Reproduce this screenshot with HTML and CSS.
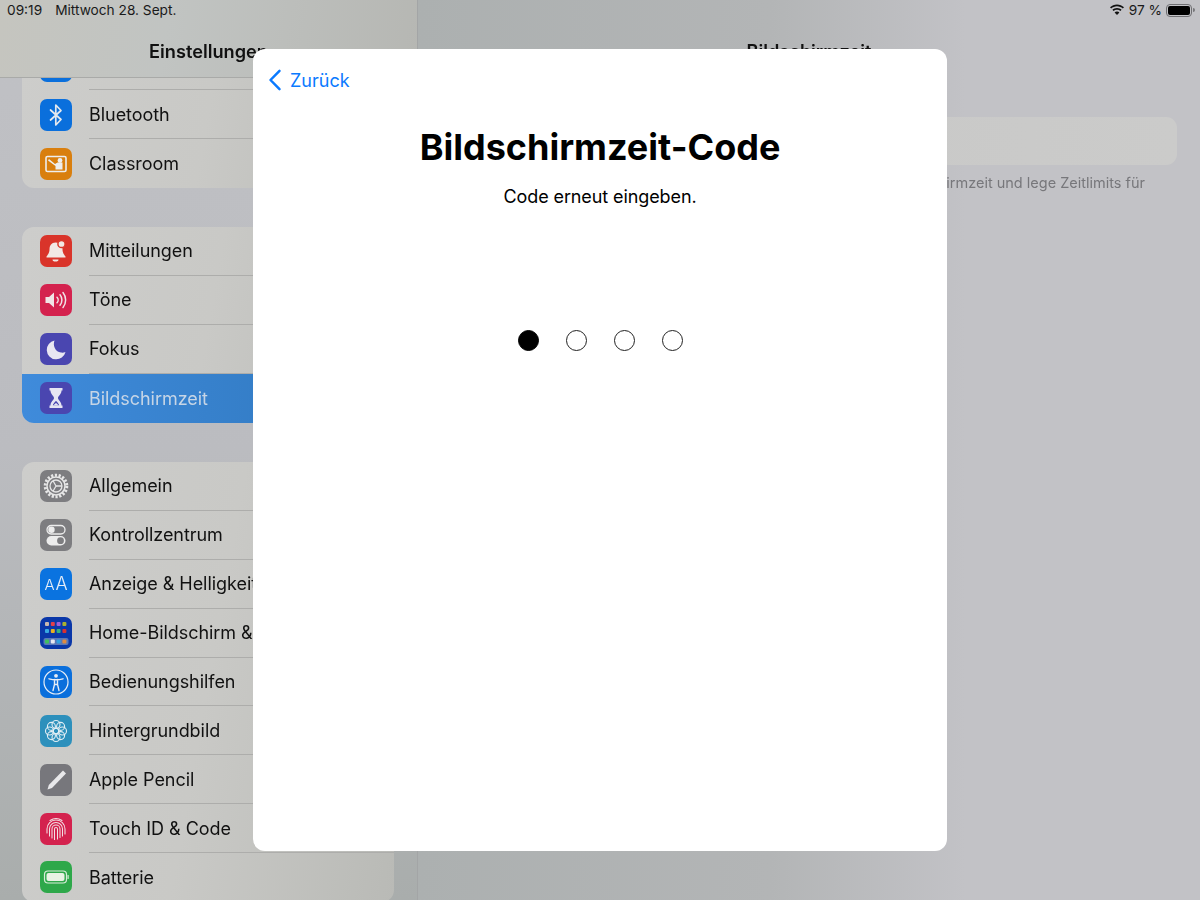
FILE: index.html
```html
<!DOCTYPE html>
<html lang="de">
<head>
<meta charset="utf-8">
<title>Bildschirmzeit-Code</title>
<link rel="stylesheet" href="styles.css">
</head>
<body>
<div class="screen">
  <aside class="sidebar">
    <header class="side-head"><h2>Einstellungen</h2></header>
    <div class="side-list">
      <section class="group first">
        <div class="row"><span class="icon blue"></span><span class="label"></span></div>
        <div class="row"><span class="icon blue"><svg viewBox="0 0 32 32"><path d="M10.500 11 21 20.500 15.800 26V6L21 11.500 10.500 21" fill="none" stroke="#e4e8ee" stroke-width="1.700" stroke-linejoin="round" stroke-linecap="round"/></svg></span><span class="label">Bluetooth</span></div>
        <div class="row"><span class="icon orange"><svg viewBox="0 0 32 32"><rect x="6" y="8.500" width="20" height="15" rx="1.500" fill="none" stroke="#eee" stroke-width="1.600"/><circle cx="20" cy="12.500" r="2.400" fill="#eee"/><path d="M9 11l6 5 2.500-1.500h5V21.500h-7V18L8 12.500z" fill="#eee"/></svg></span><span class="label">Classroom</span></div>
      </section>
      <section class="group">
        <div class="row"><span class="icon red"><svg viewBox="0 0 32 32"><path d="M15.500 7.500c-4 0-6 3-6 6.500 0 4-1.500 5.500-3 7.500v1h19v-1c-1.500-2-3-3.500-3-7.500 0-3-2-6.500-7-6.500z" fill="#f2e8e4"/><path d="M12.500 24.500h6a3 2 0 0 1-6 0z" fill="#f2e8e4"/><circle cx="21.500" cy="9" r="3.600" fill="#f2e8e4" stroke="#d93a2c" stroke-width="1.500"/></svg></span><span class="label">Mitteilungen</span></div>
        <div class="row"><span class="icon rose"><svg viewBox="0 0 32 32"><path d="M5.500 13h3.500l5-4.500v15l-5-4.500H5.500z" fill="#f0e4e6"/><path d="M17 13.200a4 4 0 0 1 0 5.600M20 10.800a8 8 0 0 1 0 10.400M23 8.500a12 12 0 0 1 0 15" fill="none" stroke="#f0e4e6" stroke-width="1.500" stroke-linecap="round"/></svg></span><span class="label">Töne</span></div>
        <div class="row"><span class="icon indigo"><svg viewBox="0 0 32 32"><path d="M14.500 7.500a9.500 9.500 0 1 0 11 11.500c-1.500.6-3 .9-4.500.6-5.500-.8-8.500-6.500-6.500-12.100z" fill="#e8e6f2"/></svg></span><span class="label">Fokus</span></div>
        <div class="row selected"><span class="icon indigo"><svg viewBox="0 0 32 32"><path d="M9.500 6h13v2.500h-1c0 4-3.500 5.500-3.500 7.500s3.500 3.500 3.500 7.500h1V26h-13v-2.500h1c0-4 3.500-5.500 3.500-7.500s-3.500-3.500-3.500-7.500h-1z" fill="#e6e4f2"/><path d="M12.800 23.200c.5-2 2.200-3 3.200-4.500 1 1.500 2.700 2.500 3.200 4.500z" fill="#4a46b0"/><path d="M13.800 23.300c.5-1.300 1.300-1.800 2.200-2.400.9.600 1.700 1.100 2.200 2.400z" fill="#e6e4f2"/></svg></span><span class="label">Bildschirmzeit</span></div>
      </section>
      <section class="group">
        <div class="row"><span class="icon gray"><svg viewBox="0 0 32 32"><circle cx="16" cy="16" r="10.800" fill="none" stroke="#e6e6e6" stroke-width="3" stroke-dasharray="2.200 1.600"/><circle cx="16" cy="16" r="9" fill="none" stroke="#e6e6e6" stroke-width="1.500"/><circle cx="16" cy="16" r="6" fill="none" stroke="#e6e6e6" stroke-width="1.300"/><path d="M16 16h6M16 16l-3-5.200M16 16l-3 5.200" stroke="#e6e6e6" stroke-width="1.300"/></svg></span><span class="label">Allgemein</span></div>
        <div class="row"><span class="icon gray"><svg viewBox="0 0 32 32"><rect x="7" y="6.500" width="18" height="8.500" rx="4.250" fill="none" stroke="#ececec" stroke-width="1.300"/><circle cx="11.500" cy="10.700" r="3.200" fill="#ececec"/><rect x="6.500" y="17" width="19" height="9.500" rx="4.750" fill="#ececec"/><circle cx="20.500" cy="21.700" r="3.400" fill="#7d7d80"/></svg></span><span class="label">Kontrollzentrum</span></div>
        <div class="row"><span class="icon azure aa"><span class="aa-small">A</span><span class="aa-big">A</span></span><span class="label">Anzeige &amp; Helligkeit</span></div>
        <div class="row"><span class="icon navy"><svg viewBox="0 0 32 32"><g><rect x="5" y="5" width="4" height="4" rx="1" fill="#c8b8b0"/><rect x="10.800" y="5" width="4" height="4" rx="1" fill="#e0404a"/><rect x="16.600" y="5" width="4" height="4" rx="1" fill="#9a5fd8"/><rect x="22.400" y="5" width="4" height="4" rx="1" fill="#a8b030"/><rect x="5" y="12" width="4" height="4" rx="1" fill="#38a8e0"/><rect x="10.800" y="12" width="4" height="4" rx="1" fill="#e8b020"/><rect x="16.600" y="12" width="4" height="4" rx="1" fill="#30b080"/><rect x="22.400" y="12" width="4" height="4" rx="1" fill="#d83030"/><rect x="3.500" y="21" width="25" height="7" rx="2" fill="#5a78b8"/><rect x="5" y="22.500" width="4" height="4" rx="1" fill="#40c060"/><rect x="10.800" y="22.500" width="4" height="4" rx="1" fill="#e8e8f0"/><rect x="16.600" y="22.500" width="4" height="4" rx="1" fill="#30a0e0"/><rect x="22.400" y="22.500" width="4" height="4" rx="1" fill="#e08a40"/></g></svg></span><span class="label">Home-Bildschirm &amp; Dock</span></div>
        <div class="row"><span class="icon blue"><svg viewBox="0 0 32 32"><circle cx="16" cy="16" r="12" fill="none" stroke="#e6edf6" stroke-width="1.200"/><circle cx="16" cy="9.800" r="1.900" fill="#e6edf6"/><path d="M9 12.800c4.500 1.300 9.500 1.300 14 0M14.500 13.500v5L13 24.500M17.500 13.500v5l1.500 6M14.500 18.500h3" fill="none" stroke="#e6edf6" stroke-width="1.400" stroke-linecap="round"/></svg></span><span class="label">Bedienungshilfen</span></div>
        <div class="row"><span class="icon teal"><svg viewBox="0 0 32 32"><g fill="none" stroke="#e2eef4" stroke-width="1.100"><circle cx="16" cy="16" r="3"/><circle cx="16" cy="9.500" r="4"/><circle cx="16" cy="22.500" r="4"/><circle cx="9.500" cy="16" r="4"/><circle cx="22.500" cy="16" r="4"/><circle cx="11.400" cy="11.400" r="4"/><circle cx="20.600" cy="11.400" r="4"/><circle cx="11.400" cy="20.600" r="4"/><circle cx="20.600" cy="20.600" r="4"/></g></svg></span><span class="label">Hintergrundbild</span></div>
        <div class="row"><span class="icon slate"><svg viewBox="0 0 32 32"><path d="M23 6.500 26 9.500 12 24 7.500 25.500 8.800 21z" fill="#e8e8ea"/></svg></span><span class="label">Apple Pencil</span></div>
        <div class="row"><span class="icon rose"><svg viewBox="0 0 32 32"><g fill="none" stroke="#f2dfe3" stroke-width="1.050" stroke-linecap="round"><path d="M7 20v-4a9 9 0 0 1 18 0v5"/><path d="M9.500 23v-7a6.500 6.500 0 0 1 13 0v7"/><path d="M12 25v-9a4 4 0 0 1 8 0v8.500"/><path d="M14.500 26.500V16a1.500 1.500 0 0 1 3 0v10"/><path d="M10 7.500a11 11 0 0 1 12 0"/></g></svg></span><span class="label">Touch ID &amp; Code</span></div>
        <div class="row"><span class="icon green"><svg viewBox="0 0 32 32"><rect x="4.500" y="10" width="22" height="12" rx="3.500" fill="none" stroke="#d8ecd8" stroke-width="1.200"/><rect x="6.500" y="12" width="18" height="8" rx="2" fill="#e8f2e4"/><rect x="27.500" y="14" width="1.200" height="4" rx=".6" fill="#d8ecd8"/></svg></span><span class="label">Batterie</span></div>
      </section>
    </div>
  </aside>

  <main class="detail">
    <header class="detail-head"><h2>Bildschirmzeit</h2></header>
    <div class="detail-card"></div>
    <p class="detail-note">Bildschirmzeit und lege Zeitlimits für</p>
  </main>

  <div class="statusbar">
    <span class="time">09:19</span>
    <span class="date">Mittwoch 28. Sept.</span>
    <span class="status-right">
      <svg class="wifi" viewBox="0 0 16 12"><path d="M8 2.300c2.300 0 4.300.9 5.800 2.300l1.200-1.300C13.200 1.500 10.700.4 8 .4S2.800 1.500 1 3.300l1.200 1.300C3.700 3.200 5.700 2.300 8 2.300z"/><path d="M8 5.700c1.400 0 2.500.5 3.400 1.300l1.200-1.300C11.400 4.600 9.800 3.900 8 3.900s-3.400.7-4.600 1.800L4.600 7C5.500 6.200 6.600 5.700 8 5.700z"/><path d="M8 7.500c-1 0-1.800.4-2.400.9L8 11l2.400-2.600C9.800 7.900 9 7.500 8 7.500z"/></svg>
      <span class="pct">97 %</span>
      <span class="battery"><span class="battery-fill"></span></span><span class="battery-tip"></span>
    </span>
  </div>

  <section class="modal">
    <header class="modal-nav">
      <svg class="chevron" viewBox="0 0 14 22"><path d="M11.500 1.800 2.500 11l9 9.200" fill="none" stroke="#0a7aff" stroke-width="2.500" stroke-linecap="round" stroke-linejoin="round"/></svg>
      <span class="back">Zurück</span>
    </header>
    <h1>Bildschirmzeit-Code</h1>
    <p class="sub">Code erneut eingeben.</p>
    <div class="dots">
      <span class="dot filled"></span>
      <span class="dot"></span>
      <span class="dot"></span>
      <span class="dot"></span>
    </div>
  </section>
</div>
</body>
</html>
```

FILE: styles.css
```css
* { box-sizing: border-box; }
html, body { margin: 0; height: 100%; }
body { overflow: hidden; font-family: Inter, "Liberation Sans", sans-serif; color: #111; }

.screen {
  position: relative;
  width: 1200px;
  height: 900px;
  display: flex;
  overflow: hidden;
  background: #b3b5b6;
}

/* sidebar */
.sidebar {
  width: 418px;
  height: 900px;
  flex: none;
  display: flex;
  flex-direction: column;
  border-right: 1px solid #a3a5a6;
  background: linear-gradient(180deg, #c0c1c5 0%, #bbbcc0 50%, #a9adac 100%);
  filter: blur(0.35px);
}
.side-head {
  height: 78px;
  flex: none;
  position: relative;
  z-index: 1;
  display: flex;
  justify-content: center;
  align-items: flex-start;
  padding-top: 40px;
  border-bottom: 1px solid #a9aaa8;
  background: linear-gradient(100deg, #c5c5bf 0%, #c1c4c2 40%, #b6b7b3 100%);
}
.side-head h2, .detail-head h2 { margin: 0; font-size: 18.2px; line-height: 22px; font-weight: 600; }
.side-list { flex: 1; min-height: 0; padding: 0 23px 0 22px; overflow: hidden; }
.group {
  border-radius: 12px;
  overflow: hidden;
  margin-bottom: 39.5px;
  background: linear-gradient(100deg, #cdcdcb 0%, #c9c9c6 50%, #b9bab6 100%);
}
.group.first { margin-top: -36.5px; margin-bottom: 38.9px; }
.row { height: 48.875px; display: flex; align-items: center; padding-left: 18px; gap: 17px; }
.label {
  flex: 1;
  height: 100%;
  display: flex;
  align-items: center;
  white-space: nowrap;
  font-size: 18px;
  letter-spacing: -0.05px;
  border-bottom: 1px solid #adadab;
}
.row:last-child .label { border-bottom: 0; }
.row.selected { background: linear-gradient(90deg, #3f8bdb 0%, #2f77bd 100%); }
.row.selected .label { color: #c6d5e6; }

.icon { width: 32px; height: 32px; flex: none; border-radius: 7px; display: flex; align-items: center; justify-content: center; }
.icon svg { width: 32px; height: 32px; display: block; }
.blue { background: #0a6fdc; }
.orange { background: #d97f0e; }
.red { background: #d9342a; }
.rose { background: #d4224e; }
.indigo { background: #4a46b0; }
.gray { background: #7d7d80; }
.azure { background: #0a73e0; }
.navy { background: #0a37a8; }
.teal { background: #2d90bc; }
.slate { background: #77777c; }
.green { background: #2ea84a; }
.aa { color: #e6eef8; align-items: baseline; gap: 1px; padding-top: 6px; font-weight: 300; }
.aa-small { font-size: 15px; line-height: 20px; }
.aa-big { font-size: 18px; line-height: 20px; }

/* detail */
.detail { flex: 1; min-width: 0; display: flex; flex-direction: column; padding: 0 23px; background: linear-gradient(90deg, #acb0b0 0%, #b3b5b6 45%, #c2c2c6 70%, #c2c2c6 100%); filter: blur(0.35px); }
.detail-head { height: 117px; flex: none; text-align: center; padding: 40px 0 0; }
.detail-card { height: 48px; flex: none; border-radius: 11px; background: linear-gradient(90deg, #bfc0bd 0%, #c9c9c8 60%, #cbcbca 100%); }
.detail-note { margin: 9px 0 0; padding-right: 32px; text-align: right; font-size: 14.5px; line-height: 17px; color: #77777b; }

/* status bar */
.statusbar {
  position: absolute;
  left: 0;
  top: 0;
  width: 100%;
  height: 20px;
  z-index: 2;
  display: flex;
  align-items: center;
  padding: 0 5px 0 7px;
  font-size: 13.7px;
  color: #1a1a1a;
}
.date { margin-left: 13px; }
.status-right { margin-left: auto; display: flex; align-items: center; }
.wifi { width: 16px; height: 12px; display: block; fill: #111; margin-right: 4px; }
.pct { margin-right: 4px; }
.battery { width: 26px; height: 13px; border: 1px solid #6f6f72; border-radius: 4px; padding: 1px; display: block; }
.battery-fill { display: block; width: 100%; height: 100%; background: #000; border-radius: 2px; }
.battery-tip { width: 2px; height: 4px; margin-left: 1px; background: #77777a; border-radius: 0 2px 2px 0; }

/* modal */
.modal {
  position: absolute;
  left: 253px;
  top: 49px;
  width: 694px;
  height: 802px;
  z-index: 3;
  background: #fff;
  border-radius: 12px;
  display: flex;
  flex-direction: column;
  align-items: center;
  color: #000;
}
.modal-nav { align-self: stretch; height: 62px; display: flex; align-items: center; gap: 8px; padding-left: 15px; }
.chevron { width: 14px; height: 22px; display: block; }
.back { font-size: 18px; color: #0a7aff; }
h1 { margin: 14px 0 0; font-size: 36px; line-height: 44px; font-weight: 700; }
.sub { margin: 16.5px 0 0; font-size: 18px; line-height: 22px; letter-spacing: -0.1px; }
.dots { display: flex; gap: 27px; margin-top: 122px; }
.dot { width: 21px; height: 21px; border-radius: 50%; border: 1.4px solid #222; }
.dot.filled { background: #000; border-color: #000; }
```
